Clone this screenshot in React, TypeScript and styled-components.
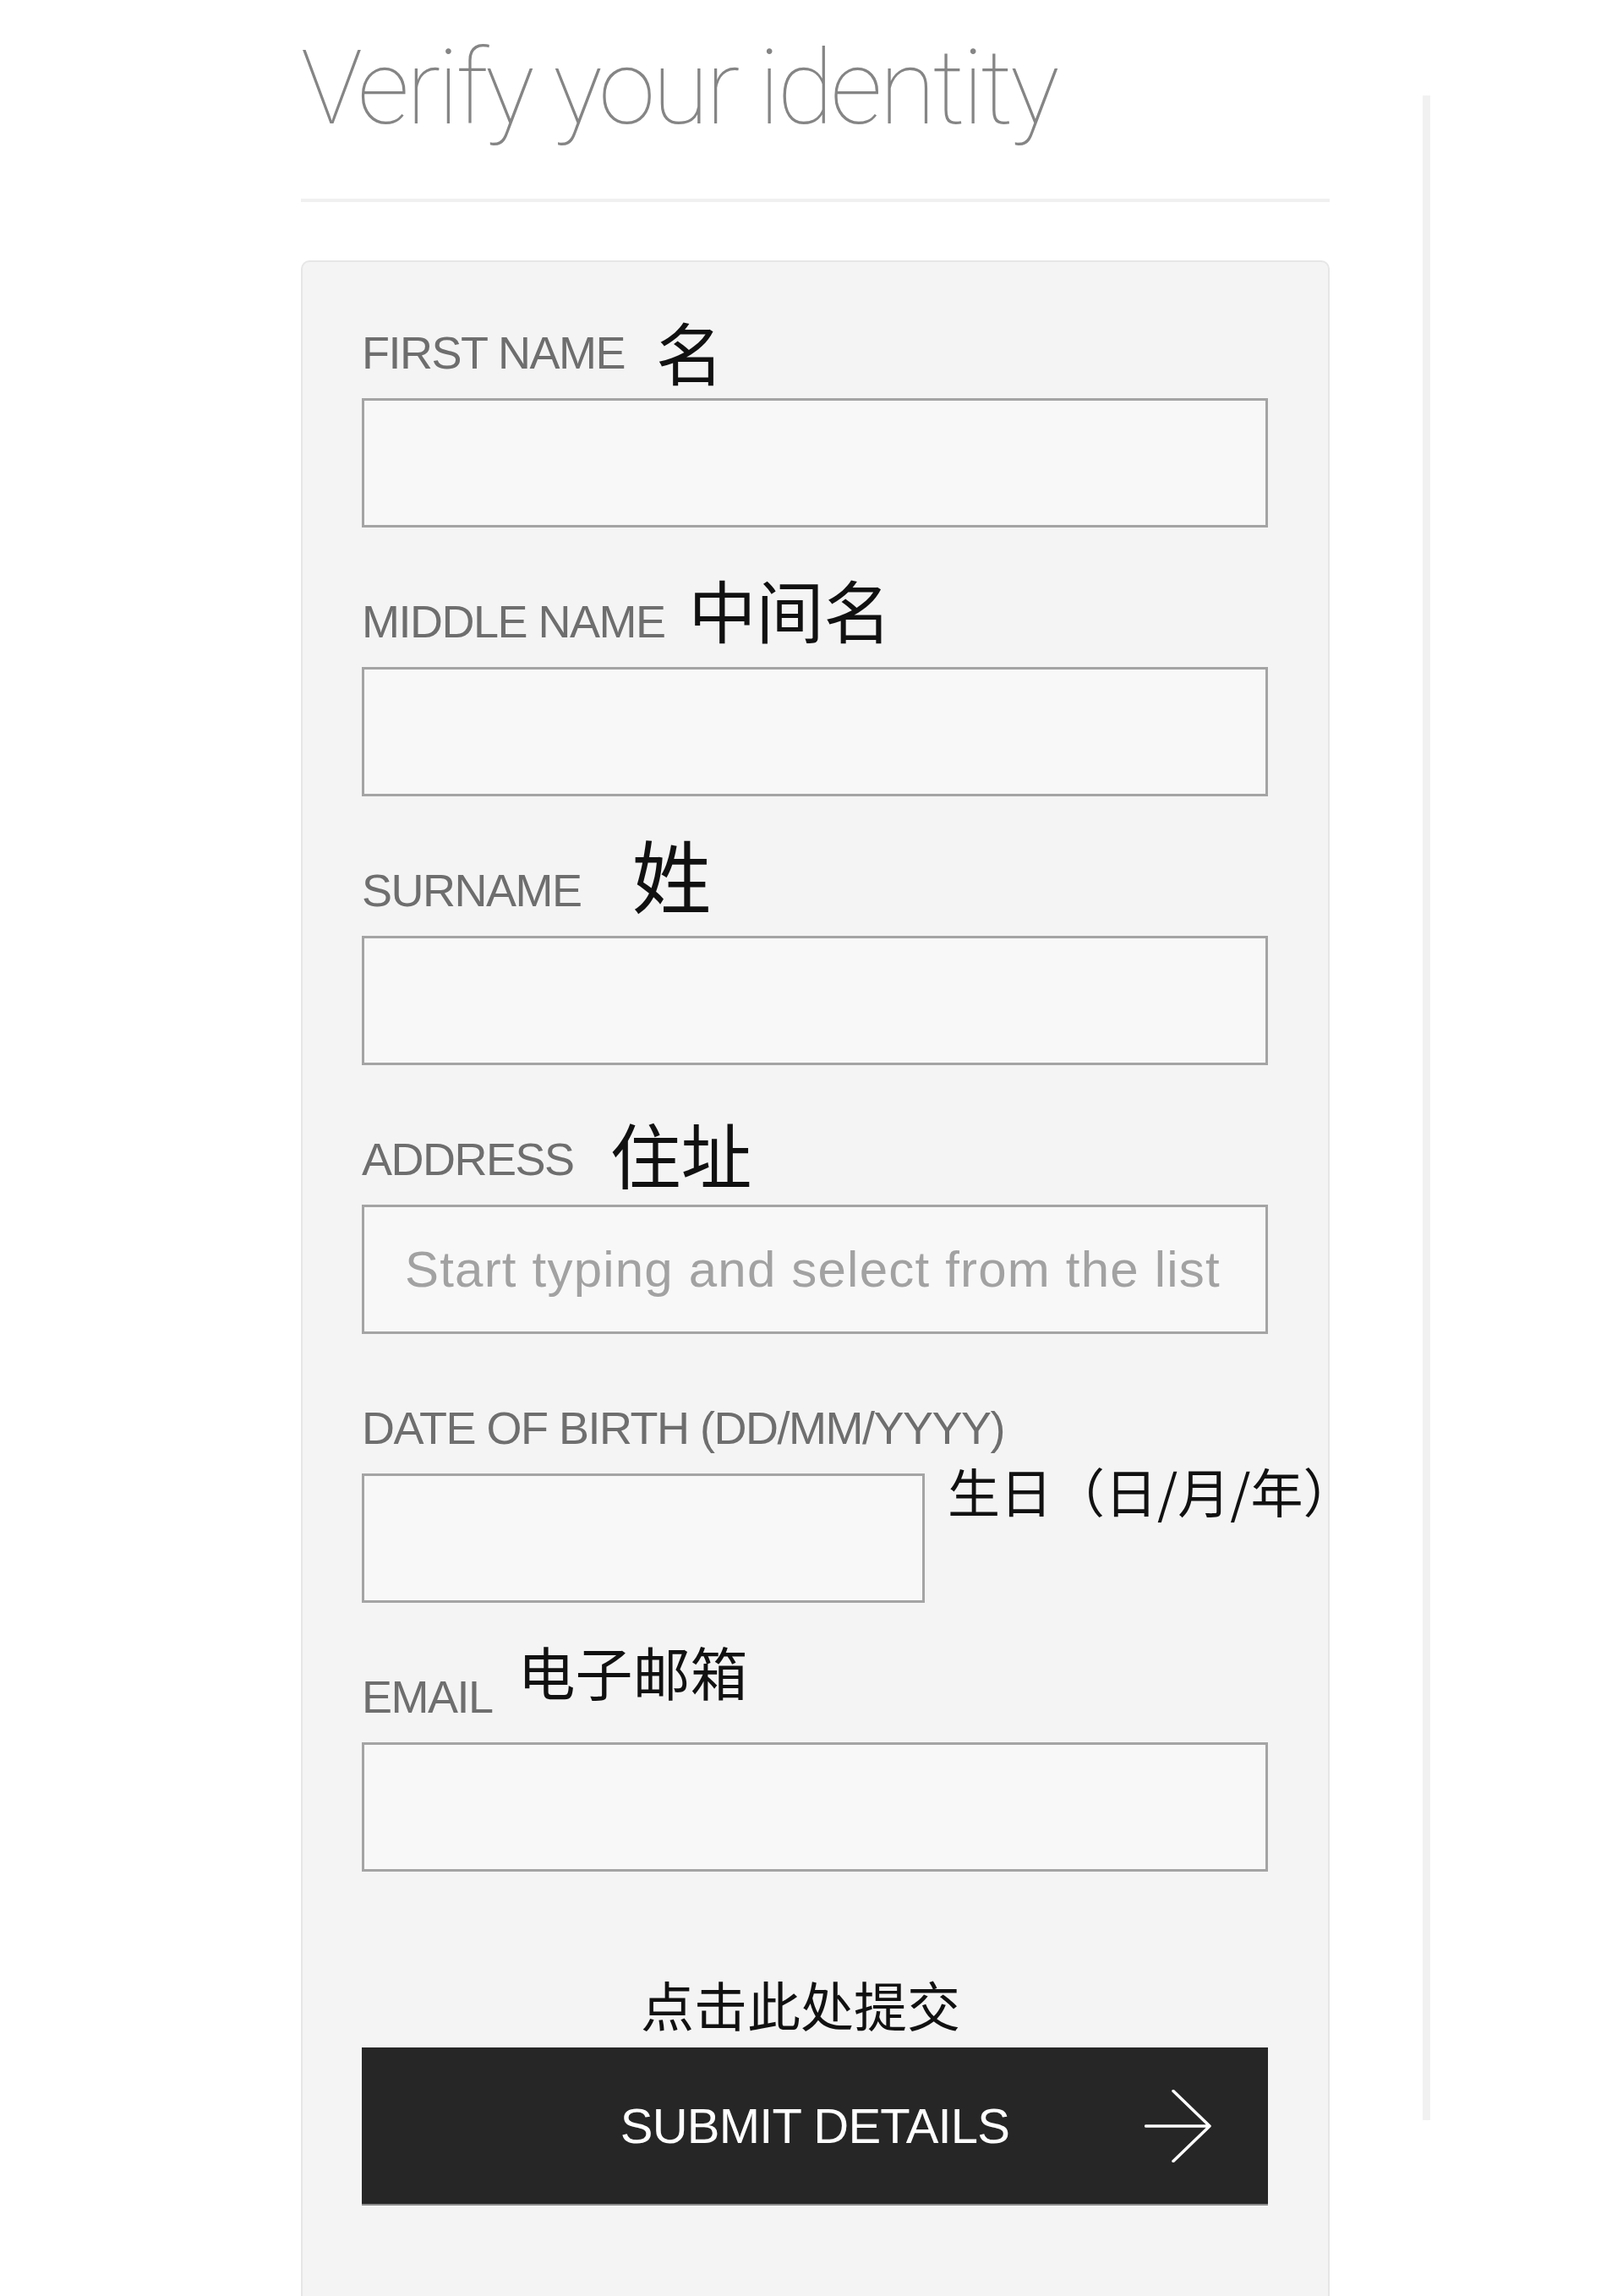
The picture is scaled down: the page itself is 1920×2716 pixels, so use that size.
import React from 'react'
import styled, { createGlobalStyle } from 'styled-components'

const GlobalStyle = createGlobalStyle`
  html, body {
    margin: 0;
    padding: 0;
    background: #fff;
    font-family: 'Liberation Sans', Arial, sans-serif;
  }
  * {
    box-sizing: border-box;
  }
`

const CJK = `'Noto Sans CJK SC', 'Noto Sans', sans-serif`

type Field = {
  label: string
  note?: string
  size?: number
  gap?: number
  lift?: number
  placeholder?: string
}

const fields: Field[] = [
  { label: 'FIRST NAME', note: '名', size: 80, gap: 37, lift: -10 },
  { label: 'MIDDLE NAME', note: '中间名', size: 80, gap: 28, lift: 3 },
  { label: 'SURNAME', note: '姓', size: 94, gap: 60, lift: 0 },
  {
    label: 'ADDRESS',
    note: '住址',
    size: 84,
    gap: 43,
    lift: -8,
    placeholder: 'Start typing and select from the list',
  },
]

const Page = styled.div`
  display: flex;
  height: 2716px;
  padding-left: 356px;
  overflow: hidden;
`

const Main = styled.main`
  width: 1217px;
  display: flex;
  flex-direction: column;
`

const Title = styled.h1`
  margin: 44px 0 0;
  font-family: Roboto, 'Liberation Sans', sans-serif;
  font-weight: 100;
  font-size: 122px;
  line-height: 1;
  letter-spacing: -3.6px;
  color: #858585;
  white-space: nowrap;
`

const Rule = styled.hr`
  margin: 69px 0 0;
  border: none;
  height: 4px;
  background: #f0f0f0;
`

const Card = styled.section`
  margin-top: 69px;
  height: 2408px;
  background: #f4f4f4;
  border: 2px solid #e6e6e6;
  border-bottom: none;
  border-radius: 10px 10px 0 0;
  padding: 74px 71px 0 70px;
  display: flex;
  flex-direction: column;
`

const Fields = styled.div`
  display: flex;
  flex-direction: column;
  gap: 78px;
`

const FieldBox = styled.div`
  display: flex;
  flex-direction: column;
`

const LabelRow = styled.div`
  display: flex;
  align-items: flex-end;
  height: 60px;
`

const Label = styled.label`
  font-size: 54px;
  line-height: 1;
  letter-spacing: -1.5px;
  color: #6e6e6e;
  white-space: nowrap;
`

const Note = styled.span<{ $size: number; $gap: number; $lift: number }>`
  font-family: ${CJK};
  font-size: ${(p) => p.$size}px;
  line-height: 1;
  color: #111;
  margin-left: ${(p) => p.$gap}px;
  margin-bottom: ${(p) => p.$lift}px;
  white-space: nowrap;
`

const InputRow = styled.div`
  display: flex;
  align-items: flex-start;
  margin-top: 27px;
`

const Input = styled.input<{ $narrow?: boolean }>`
  display: block;
  width: ${(p) => (p.$narrow ? '666px' : '100%')};
  height: 153px;
  flex: none;
  margin: 0;
  padding: 0 0 0 48px;
  border: 3px solid #a4a4a4;
  border-radius: 0;
  background: #f8f8f8;
  font-family: 'Liberation Sans', Arial, sans-serif;
  font-size: 60px;
  letter-spacing: 1.2px;
  color: #333;
  outline: none;

  &::placeholder {
    color: #a2a2a2;
  }
`

const SideNote = styled.span`
  font-family: ${CJK};
  font-size: 62px;
  line-height: 1;
  color: #111;
  margin: -11px 0 0 27px;
  white-space: nowrap;
`

const SubmitNote = styled.div`
  margin-top: 124px;
  padding-right: 34px;
  font-family: ${CJK};
  font-size: 63px;
  line-height: 1;
  color: #111;
  text-align: center;
`

const SubmitButton = styled.button`
  margin-top: 21px;
  height: 187px;
  width: 100%;
  display: grid;
  grid-template-columns: 1fr auto 1fr;
  align-items: center;
  padding: 0 66px;
  border: none;
  border-bottom: 2px solid #8a8a8a;
  background: #262626;
  color: #fff;
  font-family: 'Liberation Sans', Arial, sans-serif;
  font-size: 58px;
  letter-spacing: -0.8px;
  cursor: pointer;

  svg {
    grid-column: 3;
    justify-self: end;
  }
`

const ButtonText = styled.span`
  grid-column: 2;
  white-space: nowrap;
`

const SideRail = styled.div`
  width: 9px;
  height: 2395px;
  margin: 113px 0 0 110px;
  background: #f1f1f1;
`

const Arrow = () => (
  <svg width="80" height="86" viewBox="0 0 80 86" fill="none">
    <path
      d="M1.5 43H77M34 1.5L77 43L34 84.5"
      stroke="#fff"
      strokeWidth="3.5"
      strokeLinecap="round"
      strokeLinejoin="round"
    />
  </svg>
)

const TextField: React.FC<{ field: Field }> = ({ field }) => (
  <FieldBox>
    <LabelRow>
      <Label>{field.label}</Label>
      {field.note && (
        <Note $size={field.size ?? 80} $gap={field.gap ?? 36} $lift={field.lift ?? 0}>
          {field.note}
        </Note>
      )}
    </LabelRow>
    <InputRow>
      <Input type="text" placeholder={field.placeholder} />
    </InputRow>
  </FieldBox>
)

export default function App() {
  return (
    <>
      <GlobalStyle />
      <Page>
        <Main>
          <Title>Verify your identity</Title>
          <Rule />
          <Card>
            <Fields>
              {fields.map((f) => (
                <TextField key={f.label} field={f} />
              ))}
              <FieldBox>
                <LabelRow>
                  <Label>DATE OF BIRTH (DD/MM/YYYY)</Label>
                </LabelRow>
                <InputRow>
                  <Input type="text" $narrow />
                  <SideNote>生日（日/月/年）</SideNote>
                </InputRow>
              </FieldBox>
              <TextField
                field={{ label: 'EMAIL', note: '电子邮箱', size: 68, gap: 30, lift: 23 }}
              />
            </Fields>
            <SubmitNote>点击此处提交</SubmitNote>
            <SubmitButton type="submit">
              <ButtonText>SUBMIT DETAILS</ButtonText>
              <Arrow />
            </SubmitButton>
          </Card>
        </Main>
        <SideRail />
      </Page>
    </>
  )
}
